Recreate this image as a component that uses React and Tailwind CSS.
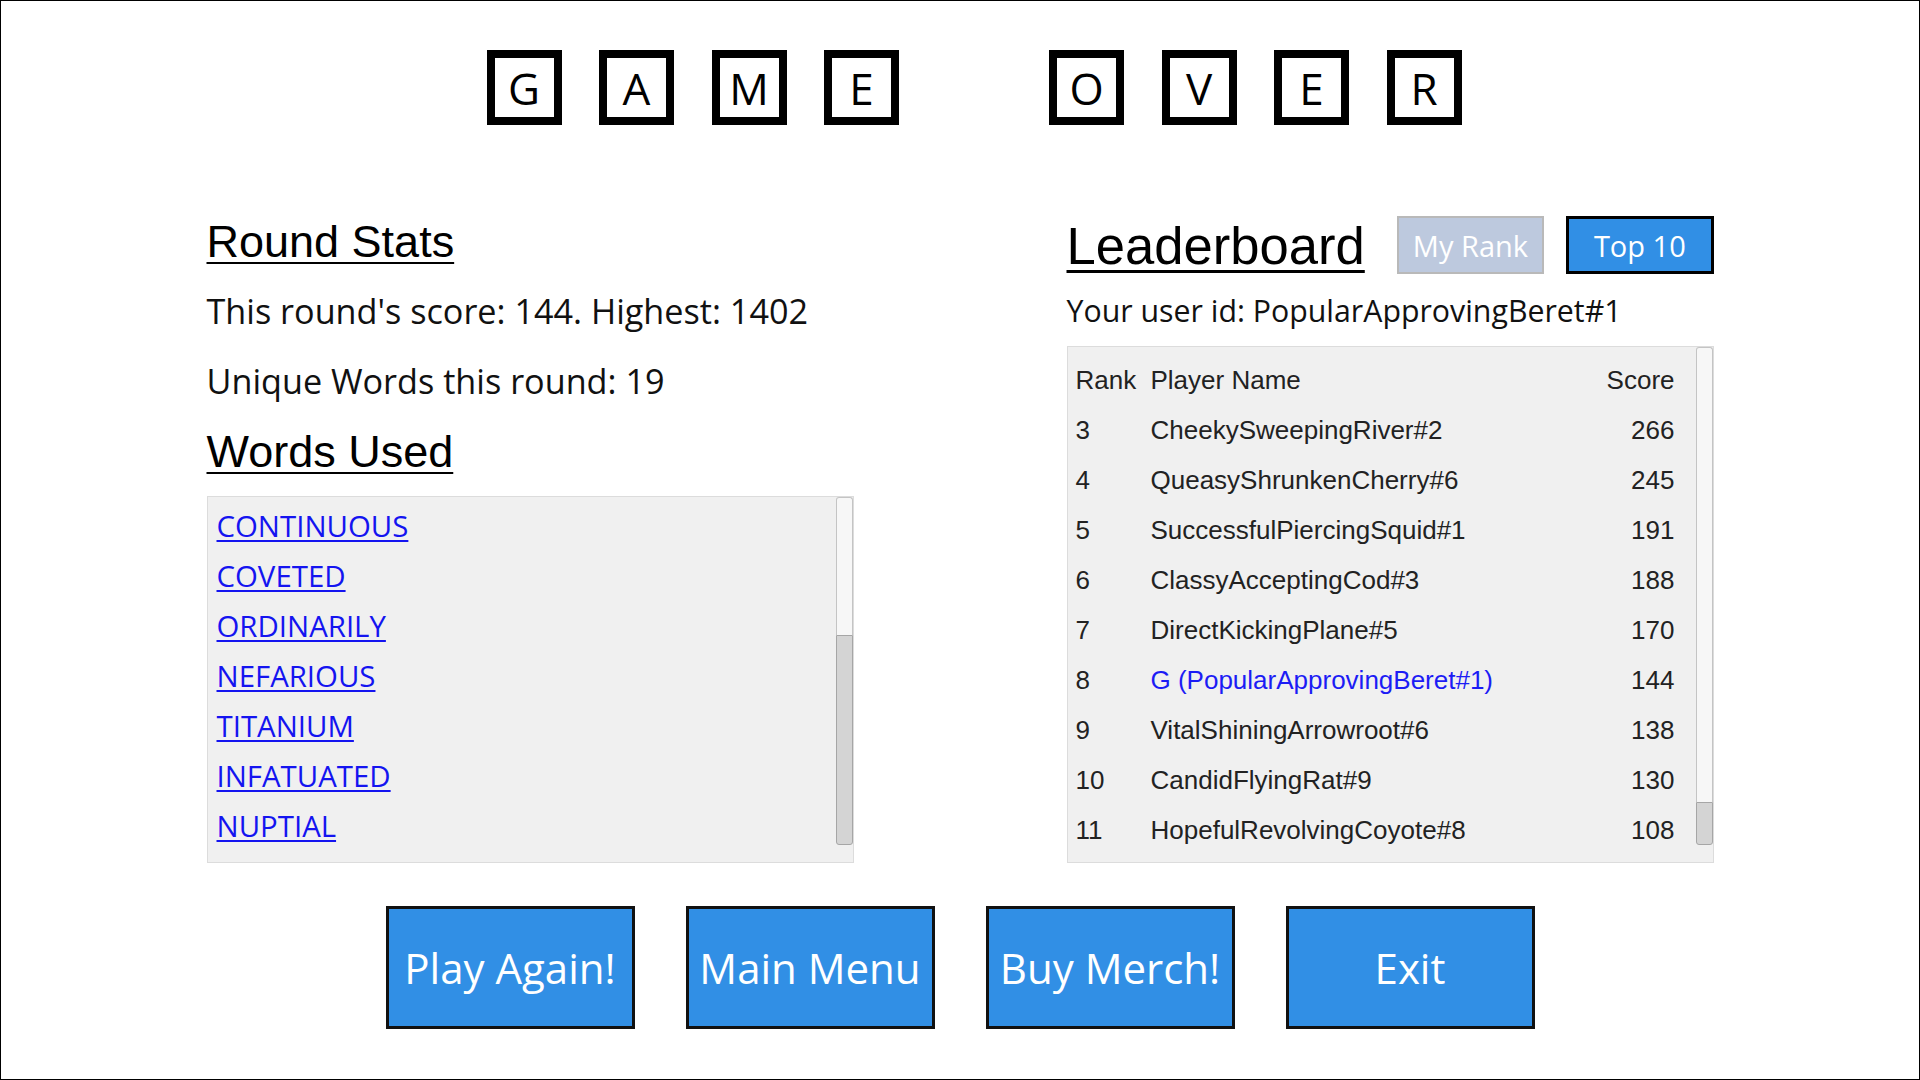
import React from "react";

const titleLetters = ["G", "A", "M", "E", "", "O", "V", "E", "R"];

const words = [
  "CONTINUOUS",
  "COVETED",
  "ORDINARILY",
  "NEFARIOUS",
  "TITANIUM",
  "INFATUATED",
  "NUPTIAL",
];

const leaders = [
  { rank: 3, name: "CheekySweepingRiver#2", score: 266 },
  { rank: 4, name: "QueasyShrunkenCherry#6", score: 245 },
  { rank: 5, name: "SuccessfulPiercingSquid#1", score: 191 },
  { rank: 6, name: "ClassyAcceptingCod#3", score: 188 },
  { rank: 7, name: "DirectKickingPlane#5", score: 170 },
  { rank: 8, name: "G (PopularApprovingBeret#1)", score: 144, me: true },
  { rank: 9, name: "VitalShiningArrowroot#6", score: 138 },
  { rank: 10, name: "CandidFlyingRat#9", score: 130 },
  { rank: 11, name: "HopefulRevolvingCoyote#8", score: 108 },
];

const sans = "font-['Open_Sans','Noto_Sans',sans-serif]";
const arial = "font-['Liberation_Sans',Arial,sans-serif]";

const ScrollBar = ({ trackClass, thumbClass }) => (
  <div className="w-[17px] shrink-0 flex flex-col">
    <div className={"bg-[#f7f7f7] border border-[#c4c4c4] border-b-0 rounded-t-[3px] " + trackClass}></div>
    <div className={"bg-[#d4d4d4] border border-[#a6a6a6] rounded-b-[3px] " + thumbClass}></div>
  </div>
);

const TitleLetter = ({ letter }) => {
  if (!letter) return <div className="w-[75px] h-[75px]"></div>;
  return (
    <div className="w-[75px] h-[75px] border-[8px] border-black flex items-center justify-center">
      <span className="text-[44px] leading-none text-black">{letter}</span>
    </div>
  );
};

const MenuButton = ({ children }) => (
  <button className="w-[249px] h-[123px] bg-[#318fe5] border-[3px] border-[#111] text-white text-[42px] leading-none flex items-center justify-center">
    {children}
  </button>
);

export default function App() {
  return (
    <div className={"w-screen h-screen overflow-hidden bg-white border border-black flex flex-col items-center " + sans}>
      <div className="mt-[49px] flex gap-[37.5px] pl-[28px]">
        {titleLetters.map((l, i) => (
          <TitleLetter key={i} letter={l} />
        ))}
      </div>

      <div className="mt-[91px] w-[1507px] flex justify-between">
        {/* round stats */}
        <div className="w-[647px] flex flex-col">
          <div className="h-[50px] flex items-center">
            <h2 className={"text-[45px] leading-none text-black underline decoration-[2px] underline-offset-[5px] " + arial}>
              Round Stats
            </h2>
          </div>
          <div className="mt-[20px] h-[50px] flex items-center text-[34.2px] text-[#111]">
            This round's score: 144. Highest: 1402
          </div>
          <div className="mt-[20px] h-[50px] flex items-center text-[34.2px] text-[#111]">
            Unique Words this round: 19
          </div>
          <div className="mt-[20px] h-[50px] flex items-center">
            <h2 className={"text-[45px] leading-none text-black underline decoration-[2px] underline-offset-[5px] " + arial}>
              Words Used
            </h2>
          </div>
          <div className="mt-[20px] h-[367px] bg-[#f0f0f0] border border-[#dcdcdc] pb-[17px] flex">
            <div className="flex-1 overflow-hidden pt-[5px] pl-[9px]">
              {words.map((w) => (
                <div key={w} className="h-[50px] flex items-center">
                  <a href="#" className="text-[29.4px] leading-none text-[#1414f0] underline decoration-[1.5px] underline-offset-[3px]">
                    {w}
                  </a>
                </div>
              ))}
            </div>
            <ScrollBar trackClass="h-[138px]" thumbClass="flex-1" />
          </div>
        </div>

        {/* leaderboard */}
        <div className="w-[647px] flex flex-col">
          <div className="h-[58px] flex items-center">
            <h2 className={"text-[52.6px] leading-none text-black underline decoration-[3px] underline-offset-[6px] pt-[2px] " + arial}>
              Leaderboard
            </h2>
            <button className="ml-[32px] w-[149px] h-[58px] bg-[#bdc9de] border-[2px] border-[#b9b9b9] text-white text-[29px] leading-none">
              My Rank
            </button>
            <button className="ml-[22px] w-[149px] h-[58px] bg-[#318fe5] border-[3px] border-black text-white text-[29px] leading-none">
              Top 10
            </button>
          </div>
          <div className="mt-[12px] h-[50px] flex items-center text-[30.3px] text-[#111]">
            Your user id: PopularApprovingBeret#1
          </div>
          <div className="mt-[10px] h-[517px] bg-[#f0f0f0] border border-[#dcdcdc] pb-[17px] flex">
            <div className={"flex-1 overflow-hidden pt-[8px] pl-[8px] pr-[21px] text-[26px] text-[#222] " + arial}>
              <div className="h-[50px] grid grid-cols-[75px_1fr_auto] items-center">
                <span>Rank</span>
                <span>Player Name</span>
                <span className="text-right">Score</span>
              </div>
              {leaders.map((r) => (
                <div key={r.rank} className="h-[50px] grid grid-cols-[75px_1fr_auto] items-center">
                  <span>{r.rank}</span>
                  <span className={r.me ? "text-[#1c1cf5]" : ""}>{r.name}</span>
                  <span className="text-right">{r.score}</span>
                </div>
              ))}
            </div>
            <ScrollBar trackClass="flex-1" thumbClass="h-[43px]" />
          </div>
        </div>
      </div>

      <div className="mt-[43px] flex gap-[51px]">
        <MenuButton>Play Again!</MenuButton>
        <MenuButton>Main Menu</MenuButton>
        <MenuButton>Buy Merch!</MenuButton>
        <MenuButton>Exit</MenuButton>
      </div>
    </div>
  );
}
